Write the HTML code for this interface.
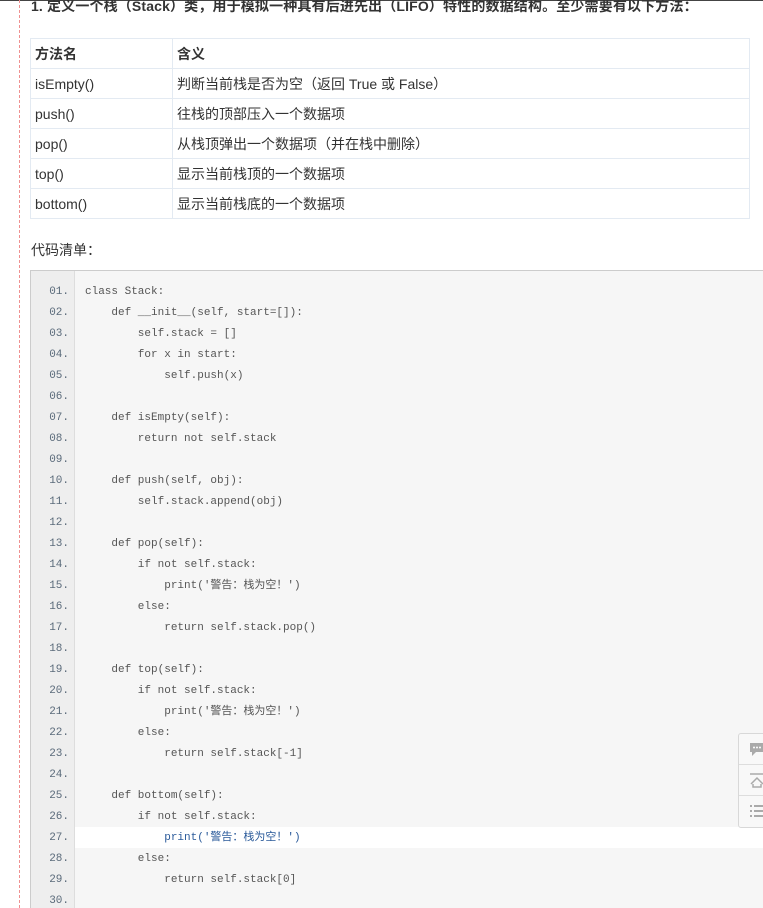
<!DOCTYPE html>
<html><head><meta charset="utf-8"><style>
html,body{margin:0;width:763px;height:908px;overflow:hidden}
body{background:#fff;position:relative;font-family:"Liberation Sans","Noto Sans CJK SC",sans-serif;color:#333}
.topline{position:absolute;left:0;top:0;width:763px;height:1px;background:#444}
.dash{position:absolute;left:19px;top:0;height:908px;border-left:1px dashed #f09090}
.title{position:absolute;left:31px;top:-4px;font-size:14px;letter-spacing:0.15px;font-weight:bold;color:#333;white-space:nowrap}
table{position:absolute;left:30px;top:38px;border-collapse:collapse;width:720px;font-size:14px}
td,th{border:1px solid #e3eaf2;height:29px;padding:0 4px;text-align:left;color:#333}
th{font-weight:bold}
td:first-child,th:first-child{width:133px}
.label{position:absolute;left:31px;top:240px;font-size:14px;color:#333}
.code{position:absolute;left:30px;top:270px;width:740px;height:640px;background:#f6f6f6;border:1px solid #ccc;border-right:none;border-bottom:none}
.gut{position:absolute;left:0;top:0;width:43px;height:640px;background:#eee;border-right:1px solid #ddd}
.ln{position:absolute;left:0;width:38px;text-align:right;font:11px "Liberation Mono",monospace;color:#5a6a7a;line-height:21px}
.cl{position:absolute;left:54px;font:11px "Liberation Mono","Noto Sans CJK SC",monospace;color:#555;line-height:21px;white-space:pre}
.hl{position:absolute;left:44px;top:556px;width:700px;height:21px;background:#fff}
.side{position:absolute;left:738px;top:733px;width:30px;height:93px;border:1px solid #d8d8d8;border-radius:3px;background:#f8f8f8}
.side div{height:30px;border-bottom:1px solid #ddd;position:relative}
.side svg{position:absolute;left:10px;top:7px}
</style></head><body>
<div class="topline"></div><div class="dash"></div>
<div class="title">1. 定义一个栈（Stack）类，用于模拟一种具有后进先出（LIFO）特性的数据结构。至少需要有以下方法：</div>
<table>
<tr><th>方法名</th><th>含义</th></tr>
<tr><td>isEmpty()</td><td>判断当前栈是否为空（返回 True 或 False）</td></tr>
<tr><td>push()</td><td>往栈的顶部压入一个数据项</td></tr>
<tr><td>pop()</td><td>从栈顶弹出一个数据项（并在栈中删除）</td></tr>
<tr><td>top()</td><td>显示当前栈顶的一个数据项</td></tr>
<tr><td>bottom()</td><td>显示当前栈底的一个数据项</td></tr>
</table>
<div class="label">代码清单：</div>
<div class="code">
<div class="gut"></div>
<div class="hl"></div>
<div id="c"></div>
</div>
<div class="side">
<div><svg width="16" height="16"><path d="M1 2h14v9H7l-4 4v-4H1z" fill="#aaa"/><circle cx="5" cy="6.5" r="1" fill="#fff"/><circle cx="8" cy="6.5" r="1" fill="#fff"/><circle cx="11" cy="6.5" r="1" fill="#fff"/></svg></div>
<div><svg width="16" height="16"><path d="M1 2h14M2 12l6-6 6 6M4 12v3h8v-3" stroke="#aaa" stroke-width="1.5" fill="none"/></svg></div>
<div style="border:none"><svg width="16" height="16"><path d="M1 3h2M1 8h2M1 13h2M5 3h10M5 8h10M5 13h10" stroke="#aaa" stroke-width="2"/></svg></div>
</div>
<script>
var L=["class Stack:","    def __init__(self, start=[]):","        self.stack = []","        for x in start:","            self.push(x)","","    def isEmpty(self):","        return not self.stack","","    def push(self, obj):","        self.stack.append(obj)","","    def pop(self):","        if not self.stack:","            print('警告：栈为空！')","        else:","            return self.stack.pop()","","    def top(self):","        if not self.stack:","            print('警告：栈为空！')","        else:","            return self.stack[-1]","","    def bottom(self):","        if not self.stack:","            print('警告：栈为空！')","        else:","            return self.stack[0]",""];
var h="";for(var i=0;i<L.length;i++){var t=11+i*21;var n=(i<9?"0":"")+(i+1)+".";
h+='<div class="ln" style="top:'+t+'px">'+n+'</div><div class="cl" style="top:'+t+'px'+(i==26?';color:#2a5a9a':'')+'">'+L[i]+'</div>';}
document.getElementById("c").innerHTML=h;
</script>
</body></html>
